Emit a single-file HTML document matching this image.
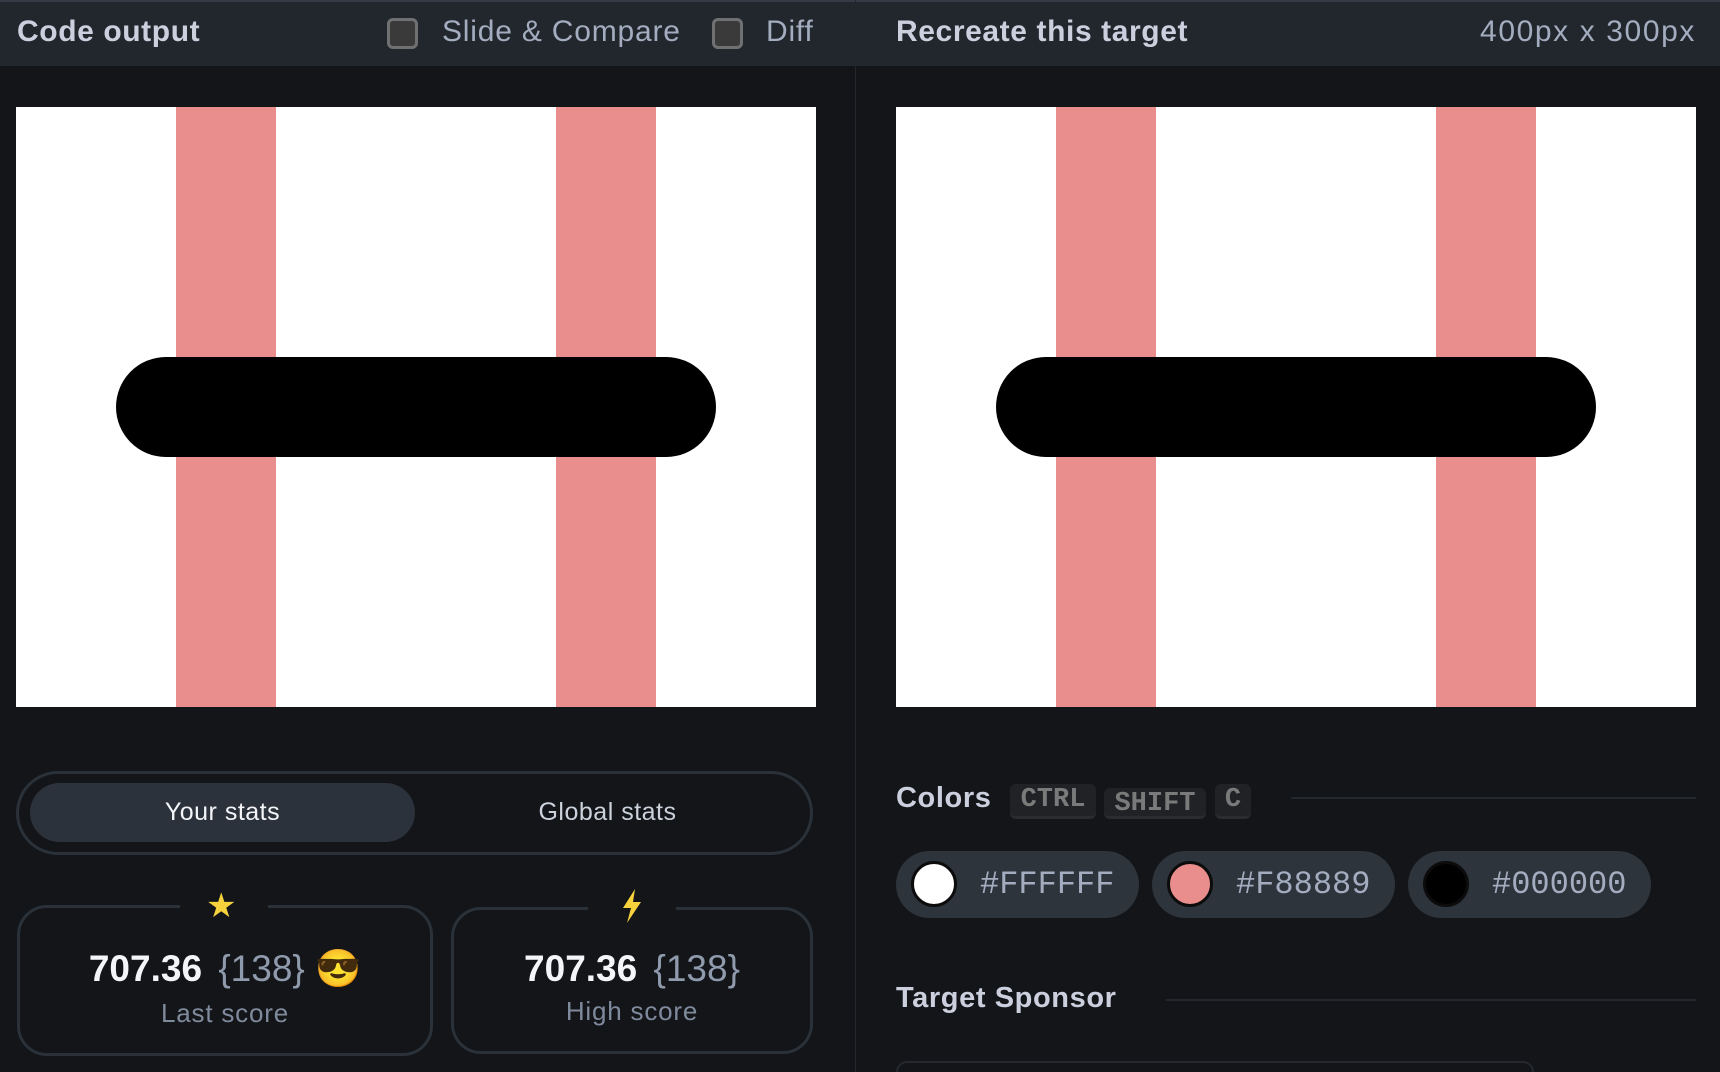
<!DOCTYPE html>
<html><head><meta charset="utf-8"><style>
*{margin:0;padding:0;box-sizing:border-box}
html{overflow:hidden;height:1072px}
body{width:1720px;height:1072px;background:#131519;position:relative;overflow:hidden;font-family:"Liberation Sans",sans-serif}
.abs{position:absolute}
.hdr{top:0;height:66px;background:#22272d;border-top:2px solid #353b44}
.t{color:#ccd0de;font-weight:bold;font-size:30px;top:15px;white-space:nowrap;letter-spacing:0.6px}
.g{color:#a3adbf;font-size:30px;top:15px;white-space:nowrap;letter-spacing:0.8px}
.cb{width:31px;height:31px;border:3px solid #6f7072;background:#3a3a3a;border-radius:6px;top:18px}
.cv{width:800px;height:600px;top:107px;background:#fff;overflow:hidden}
.st{position:absolute;top:0;width:100px;height:600px;background:#e98e8d}
.bar{position:absolute;left:100px;top:250px;width:600px;height:100px;background:#000;border-radius:50px}
.card{border:3px solid #2a3139;border-radius:30px}
.num{color:#f3f5f9;font-weight:bold;font-size:37px;white-space:nowrap;text-align:center;width:100%;top:40px}
.num span{color:#8f9aad;font-weight:normal;margin-left:6px}
.lab{color:#7f8a9c;font-size:26px;text-align:center;width:100%;top:90px;letter-spacing:0.8px}
.key{background:#202226;border-bottom:3px solid #2a2c30;border-radius:6px;color:#7a7a7a;font-family:"Liberation Mono",monospace;font-weight:bold;font-size:27px;text-align:center;line-height:32px}
.pill{top:851px;height:67px;width:243px;background:#2d343c;border-radius:34px}
.pill i{position:absolute;left:15px;top:10px;width:46px;height:46px;border-radius:50%;border:3px solid #0c0c0c}
.pill b{position:absolute;left:84px;top:15px;font-family:"Liberation Mono",monospace;font-weight:normal;font-size:32px;color:#a3adbf}
.line{height:2px;background:#22282d}
</style></head><body>
<div class="abs hdr" style="left:0;width:855px"></div>
<div class="abs hdr" style="left:856px;width:864px"></div>
<div class="abs" style="left:855px;top:0;width:1px;height:1072px;background:#22272d"></div>
<div class="abs t" style="left:17px">Code output</div>
<div class="abs cb" style="left:387px"></div>
<div class="abs g" style="left:442px">Slide &amp; Compare</div>
<div class="abs cb" style="left:712px"></div>
<div class="abs g" style="left:766px">Diff</div>
<div class="abs t" style="left:896px">Recreate this target</div>
<div class="abs g" style="right:24px;letter-spacing:1.6px">400px x 300px</div>

<div class="abs cv" style="left:16px"><div class="st" style="left:160px"></div><div class="st" style="left:540px"></div><div class="bar"></div></div>
<div class="abs cv" style="left:896px"><div class="st" style="left:160px"></div><div class="st" style="left:540px"></div><div class="bar"></div></div>

<div class="abs" style="left:16px;top:771px;width:797px;height:84px;border:3px solid #2a3139;border-radius:42px"></div>
<div class="abs" style="left:30px;top:783px;width:385px;height:59px;background:#2c323b;border-radius:30px;color:#f3f5f9;font-size:25px;text-align:center;line-height:59px;letter-spacing:0.5px">Your stats</div>
<div class="abs" style="left:415px;top:783px;width:385px;height:59px;color:#ccd2dc;font-size:25px;text-align:center;line-height:59px;letter-spacing:0.5px">Global stats</div>

<div class="abs card" style="left:17px;top:905px;width:416px;height:151px">
<div class="abs num">707.36 <span>{138}</span> 😎</div><div class="abs lab">Last score</div></div>
<div class="abs" style="left:180px;top:896px;width:88px;height:14px;background:#131519"></div>
<div class="abs" style="left:206px;top:886px;font-size:34px;color:#f6d33c">★</div>
<div class="abs card" style="left:451px;top:907px;width:362px;height:147px">
<div class="abs num" style="top:38px">707.36 <span>{138}</span></div><div class="abs lab" style="top:86px">High score</div></div>
<div class="abs" style="left:588px;top:896px;width:88px;height:14px;background:#131519"></div>
<svg class="abs" style="left:618px;top:888px" width="28" height="36" viewBox="0 0 28 36"><path d="M17 1 L5 20 H13 L9 35 L23 14 H15 Z" fill="#f6d33c"/></svg>

<div class="abs t" style="left:896px;top:782px;font-size:29px">Colors</div>
<div class="abs key" style="left:1010px;top:784px;width:86px;height:35px">CTRL</div>
<div class="abs key" style="left:1104px;top:788px;width:102px;height:31px">SHIFT</div>
<div class="abs key" style="left:1215px;top:784px;width:36px;height:35px">C</div>
<div class="abs line" style="left:1291px;top:797px;width:405px"></div>
<div class="abs pill" style="left:896px"><i style="background:#fff"></i><b>#FFFFFF</b></div>
<div class="abs pill" style="left:1152px"><i style="background:#e98e8d"></i><b>#F88889</b></div>
<div class="abs pill" style="left:1408px"><i style="background:#000"></i><b>#000000</b></div>
<div class="abs t" style="left:896px;top:982px;font-size:29px">Target Sponsor</div>
<div class="abs line" style="left:1166px;top:999px;width:530px"></div>
<div class="abs" style="left:896px;top:1061px;width:638px;height:11px;border:2px solid #25292e;border-bottom:none;border-radius:12px 12px 0 0"></div>
</body></html>
